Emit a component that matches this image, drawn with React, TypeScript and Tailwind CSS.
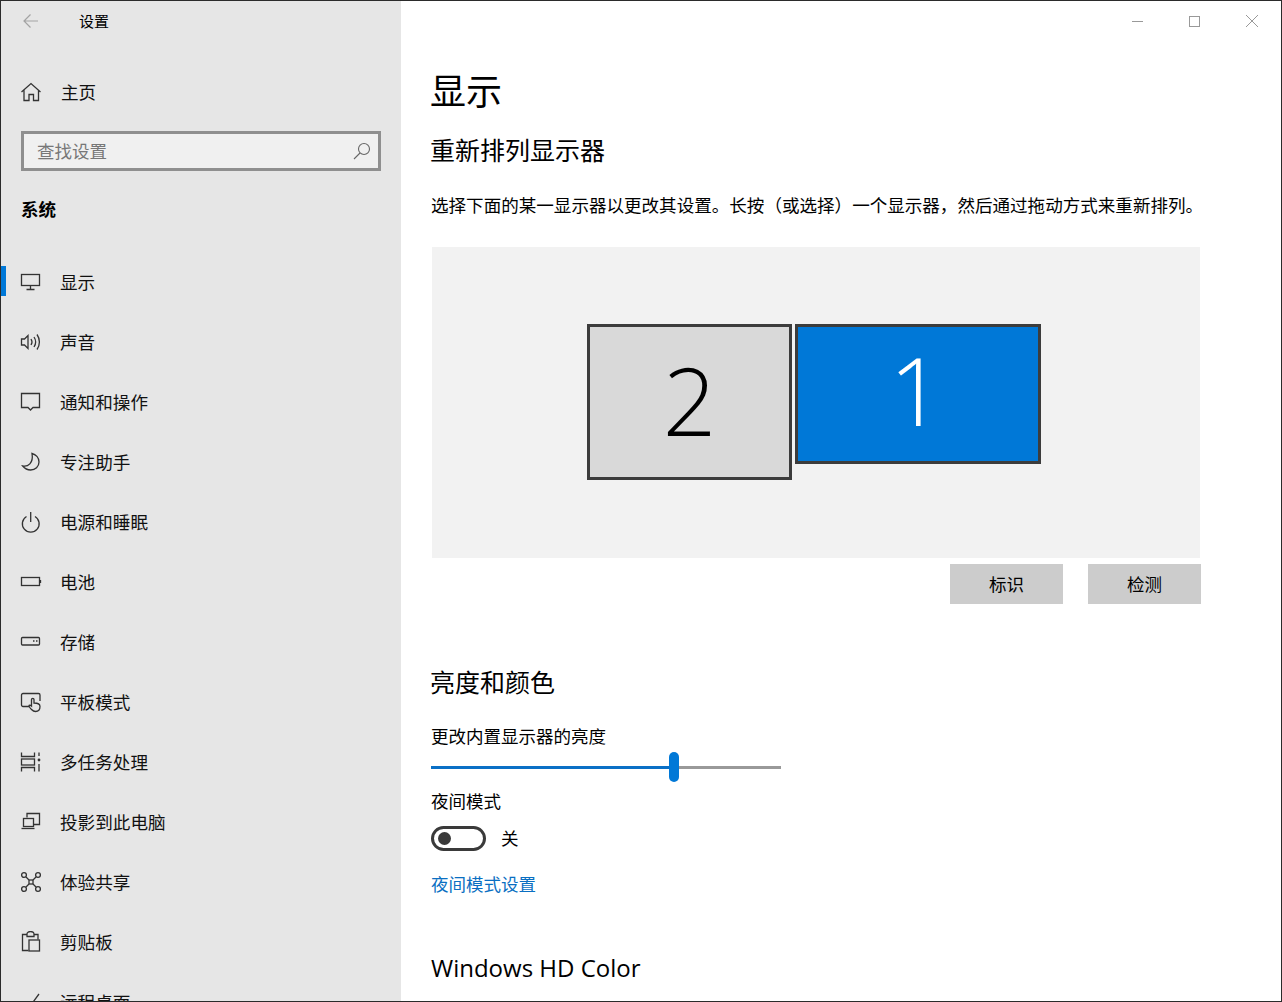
import React from "react";

const cjk = "font-['Noto_Sans_CJK_SC','Noto_Sans',sans-serif]";

function I({ children, w = 22 }: { children: React.ReactNode; w?: number }) {
  return (
    <svg width={w} height={22} viewBox="0 0 22 22" fill="none" stroke="#333" strokeWidth={1.3} className="shrink-0">
      {children}
    </svg>
  );
}

const icons: Record<string, React.ReactNode> = {
  display: (
    <>
      <rect x="1.500" y="3.500" width="18" height="11" />
      <path d="M10.500 15v3M6.500 18.500h8" />
    </>
  ),
  sound: (
    <>
      <path d="M1.500 8h3l3.500-3.500v13L4.500 14h-3z" />
      <path d="M11 8c1.200 1.800 1.200 4.200 0 6M14 6c2 3 2 7 0 10M17 3.500c3.200 4.500 3.200 10.500 0 15" />
    </>
  ),
  notify: <path d="M1.500 2.500h18v14h-6.500l-2.500 2.500-2.500-2.500h-6.500z" />,
  moon: <path d="M12 2.500c3.800 1 7 4.200 7 8.500 0 4.500-3.700 8-8.300 8-3.500 0-6-1.500-8-4 5 1 11-2.500 9.300-12.500z" />,
  power: (
    <>
      <path d="M6.500 5.500a8.400 8.400 0 1 0 8.500 0" />
      <path d="M10.700 1v10" />
    </>
  ),
  battery: (
    <>
      <rect x="1.500" y="6.500" width="18" height="8" />
      <path d="M20.500 9v3" />
    </>
  ),
  storage: (
    <>
      <rect x="1.500" y="6.500" width="18" height="7.500" rx="1" />
      <path d="M13 10h1.500M16 10h1.500" />
    </>
  ),
  tablet: (
    <>
      <path d="M9 15.500H3a1.500 1.500 0 0 1-1.500-1.500V4A1.500 1.500 0 0 1 3 2.500h15.500A1.500 1.500 0 0 1 20 4v6" />
      <path d="M11.500 18.500c-1-1-2.500-2.500-2.500-3.500s1.500-1 2.500 0V8.500c0-1.500 2.500-1.500 2.500 0V12c3 0 6 .5 6 3.500 0 3-1.500 5-4.500 5-2 0-3-1-4-2z" />
    </>
  ),
  multi: (
    <>
      <path d="M1.500 1.500v4h13v-4M1.500 20.500v-4h13v4" />
      <rect x="1.500" y="8" width="13" height="6" />
      <path d="M19 1.500v3.500M19 13v7.500" />
      <circle cx="19" cy="9" r="1.400" fill="#333" stroke="none" />
    </>
  ),
  project: (
    <>
      <path d="M7 6.500V2.500h12.500v11H14" />
      <rect x="3.500" y="7.500" width="10" height="8" />
      <path d="M1.500 17.500h13" />
    </>
  ),
  share: (
    <>
      <circle cx="4" cy="4" r="2.400" />
      <circle cx="18" cy="4" r="2.400" />
      <circle cx="4" cy="18" r="2.400" />
      <circle cx="18" cy="18" r="2.400" />
      <path d="M6 6l3 3M16 6l-3 3M6 16l3-3M16 16l-3-3" />
      <rect x="9" y="9" width="4" height="4" />
    </>
  ),
  clip: (
    <>
      <path d="M7 3.500H2.500v16h6M14 3.500h4v5" />
      <path d="M7 5.500V3a3.500 2.500 0 0 1 7 0v2.500z" />
      <rect x="9" y="9" width="10.500" height="11" />
    </>
  ),
  remote: <path d="M3 13l5 5L19 3M3 22l3-3" />,
};

const nav: [string, string][] = [
  ["display", "显示"],
  ["sound", "声音"],
  ["notify", "通知和操作"],
  ["moon", "专注助手"],
  ["power", "电源和睡眠"],
  ["battery", "电池"],
  ["storage", "存储"],
  ["tablet", "平板模式"],
  ["multi", "多任务处理"],
  ["project", "投影到此电脑"],
  ["share", "体验共享"],
  ["clip", "剪贴板"],
  ["remote", "远程桌面"],
];

function Sidebar() {
  return (
    <aside className="w-[400px] shrink-0 bg-[#e6e6e6] flex flex-col text-black">
      <div className="h-[40px] flex items-center pl-[21px] shrink-0">
        <svg width="18" height="16" viewBox="0 0 18 16" fill="none" stroke="#a3a3a3" strokeWidth="1.2">
          <path d="M16 8H2M8.500 1.500 2 8l6.500 6.500" />
        </svg>
        <span className="ml-[39px] text-[15px] leading-none pb-[2px]">设置</span>
      </div>
      <div className="h-[60px] mt-[21px] flex items-center pl-[19px] shrink-0">
        <I>
          <path d="M1.500 11 11 2.500l9.500 8.500M4 9v10.500h5v-6h4.500v6h5V9" />
        </I>
        <span className="ml-[19px] text-[17.600px] leading-none text-[#111]">主页</span>
      </div>
      <div className="mx-[20px] mt-[9px] h-[40px] border-[3px] border-[#8f8f8f] bg-[#f0f0f0] flex items-center pl-[13px] pr-[7px] justify-between shrink-0">
        <span className="text-[17.500px] text-[#777] leading-none">查找设置</span>
        <svg width="18" height="18" viewBox="0 0 18 18" fill="none" stroke="#666" strokeWidth="1.100">
          <circle cx="11" cy="7" r="5.500" />
          <path d="M7 11 1 17" />
        </svg>
      </div>
      <div className="mt-[28px] pl-[20px] text-[17.500px] font-bold leading-[20px] shrink-0">系统</div>
      <nav className="mt-[33px] flex flex-col">
        {nav.map(([k, t], i) => (
          <div key={k} className="relative h-[60px] flex items-center pl-[19px] shrink-0">
            {i === 0 && <div className="absolute left-0 top-[14px] w-[5px] h-[30px] bg-[#0078d7]" />}
            <I>{icons[k]}</I>
            <span className="ml-[18px] text-[17.600px] leading-none text-[#111]">{t}</span>
          </div>
        ))}
      </nav>
    </aside>
  );
}

function Main() {
  return (
    <main className="flex-1 bg-white relative pl-[30px] pr-[80px] text-black min-w-0">
      <div className="absolute right-[23px] top-[14px] flex items-center gap-[46px]">
        <div className="w-[11px] h-px bg-[#999]" />
        <div className="w-[11px] h-[11px] border border-[#999]" />
        <svg width="12" height="12" viewBox="0 0 12 12" stroke="#999" strokeWidth="1">
          <path d="M0 0l12 12M12 0 0 12" />
        </svg>
      </div>
      <h1 className="pt-[64px] -ml-[1px] text-[36px] leading-[48px] font-normal">显示</h1>
      <h2 className="mt-[19px] -ml-[1px] text-[25px] leading-[34px] font-normal">重新排列显示器</h2>
      <p className="mt-[27px] text-[17.560px] leading-[24px] whitespace-nowrap">
        选择下面的某一显示器以更改其设置。长按（或选择）一个显示器，然后通过拖动方式来重新排列。
      </p>
      <div className="mt-[30px] ml-[1px] w-[768px] h-[311px] bg-[#f2f2f2] pl-[155px] pt-[77px] flex items-start gap-[3px]">
        <div className="w-[205px] h-[156px] bg-[#d9d9d9] border-[3px] border-[#3c3c3c] flex items-center justify-center pb-[4px] text-[94px] leading-none text-black font-['Open_Sans',sans-serif] font-light">
          2
        </div>
        <div className="w-[246px] h-[140px] bg-[#0078d7] border-[3px] border-[#3c3c3c] flex items-center justify-center pr-[4px] pb-[9px] text-[94px] leading-none text-white font-['Open_Sans',sans-serif] font-light">
          1
        </div>
      </div>
      <div className="mt-[6px] w-[770px] flex justify-end gap-[25px]">
        <div className="w-[113px] h-[40px] bg-[#cccccc] flex items-center justify-center text-[17.500px]">标识</div>
        <div className="w-[113px] h-[40px] bg-[#cccccc] flex items-center justify-center text-[17.500px]">检测</div>
      </div>
      <h2 className="mt-[60px] -ml-[1px] text-[25px] leading-[34px] font-normal">亮度和颜色</h2>
      <div className="mt-[26px] text-[17.500px] leading-[24px]">更改内置显示器的亮度</div>
      <div className="relative mt-[4px] w-[350px] h-[30px] flex items-center">
        <div className="w-[243px] h-[3px] bg-[#0a70c6]" />
        <div className="flex-1 h-[3px] bg-[#999]" />
        <div className="absolute left-[238px] top-0 w-[10px] h-[30px] rounded-full bg-[#0078d7]" />
      </div>
      <div className="mt-[7px] text-[17.500px] leading-[24px]">夜间模式</div>
      <div className="mt-[12px] flex items-center h-[26px]">
        <div className="w-[55px] h-[25px] rounded-full border-[3px] border-[#3a3a3a] flex items-center pl-[4px]">
          <div className="w-[13px] h-[13px] rounded-full bg-[#3a3a3a]" />
        </div>
        <span className="ml-[15px] text-[17.500px] leading-none">关</span>
      </div>
      <div className="mt-[21px] text-[17.500px] leading-[24px] text-[#0a6fc2]">夜间模式设置</div>
      <h2 className="mt-[55px] text-[24px] leading-[34px] font-normal font-['Open_Sans','Noto_Sans',sans-serif]">
        Windows HD Color
      </h2>
    </main>
  );
}

export default function App() {
  return (
    <div className={`${cjk} w-[1282px] h-[1002px] overflow-hidden border border-[#2b2b2b] flex`}>
      <Sidebar />
      <Main />
    </div>
  );
}
